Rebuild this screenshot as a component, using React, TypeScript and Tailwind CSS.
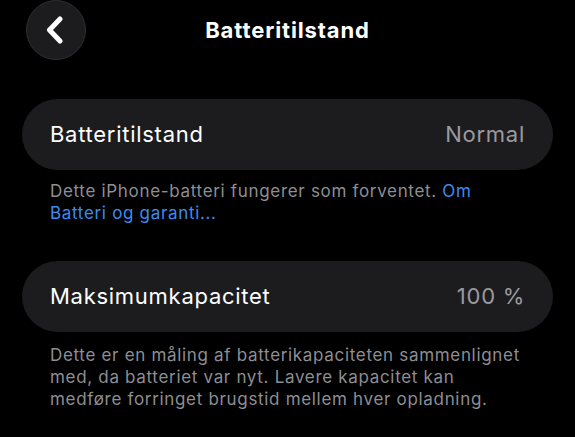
import { ReactNode } from "react";

function BackButton() {
  return (
    <button className="ml-[26px] flex h-[60px] w-[60px] items-center justify-center rounded-full border border-[#2e2e30] bg-[#1c1c1e]">
      <svg width="18" height="28" viewBox="0 0 18 28" className="-ml-[3px]">
        <path
          d="M14 3 L3.5 14 L14 25"
          fill="none"
          stroke="#ffffff"
          strokeWidth="5"
          strokeLinecap="round"
          strokeLinejoin="round"
        />
      </svg>
    </button>
  );
}

function Row({ label, value }: { label: string; value: string }) {
  return (
    <div className="flex h-[71px] items-center justify-between rounded-full bg-[#1c1c1e] px-[28px] text-[22px] tracking-[0.033em]">
      <span className="text-white">{label}</span>
      <span className="text-[#9a9aa0]">{value}</span>
    </div>
  );
}

function Note({ children, className = "" }: { children: ReactNode; className?: string }) {
  return (
    <p
      className={`px-[28px] text-[17px] leading-[22px] tracking-[0.04em] text-[#8e8e93] ${className}`}
    >
      {children}
    </p>
  );
}

export default function App() {
  return (
    <div
      className="h-[437px] w-[575px] overflow-hidden bg-black"
      style={{ fontFamily: "Inter, 'Noto Sans', sans-serif" }}
    >
      {/* Navigasjon */}
      <div className="grid h-[60px] grid-cols-[1fr_auto_1fr] items-center">
        <div>
          <BackButton />
        </div>
        <h1 className="text-[22px] font-bold leading-[28px] tracking-[0.04em] text-white">
          Batteritilstand
        </h1>
        <div />
      </div>

      <div className="px-[22px]">
        <div className="mt-[39px]">
          <Row label="Batteritilstand" value="Normal" />
        </div>
        <Note className="mt-[10px]">
          Dette iPhone-batteri fungerer som forventet.{" "}
          <span className="text-[#3a8cf2]">Om</span>
          <br />
          <span className="text-[#3a8cf2]">Batteri og garanti...</span>
        </Note>

        <div className="mt-[37px]">
          <Row label="Maksimumkapacitet" value="100 %" />
        </div>
        <Note className="mt-[12px]">
          Dette er en måling af batterikapaciteten sammenlignet
          <br />
          med, da batteriet var nyt. Lavere kapacitet kan
          <br />
          medføre forringet brugstid mellem hver opladning.
        </Note>
      </div>
    </div>
  );
}
